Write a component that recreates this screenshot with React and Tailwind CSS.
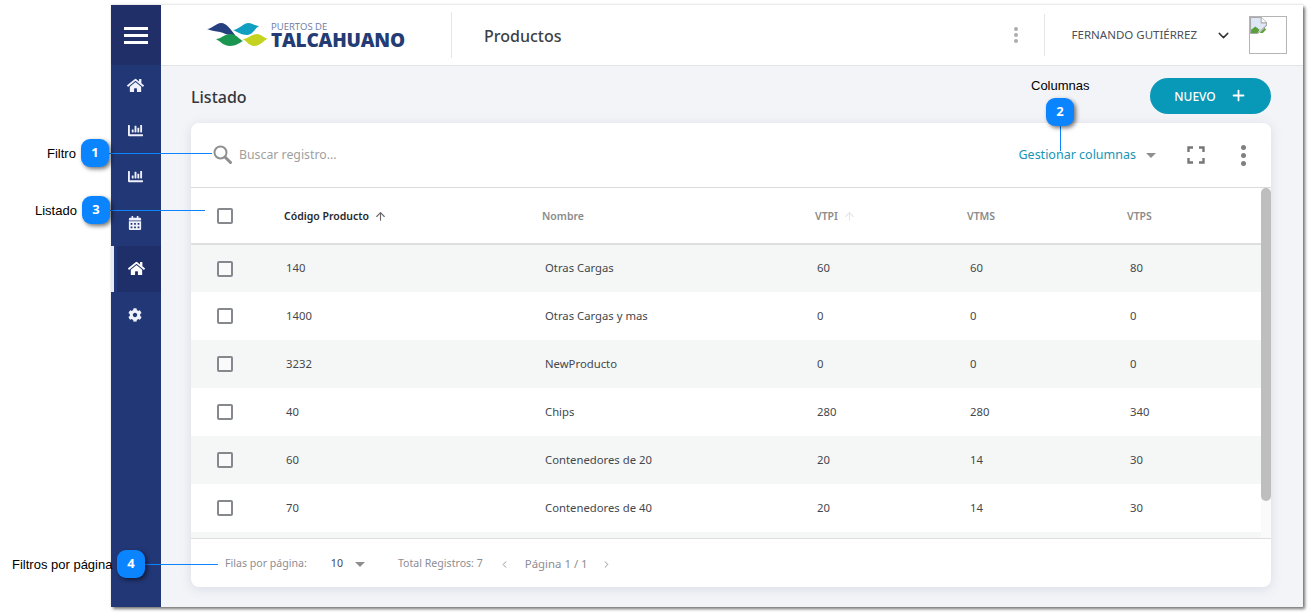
import { ArrowUp, ChevronDown, ChevronLeft, ChevronRight, Plus } from "lucide-react";
import { FaCalendarAlt, FaChartBar, FaCog, FaHome } from "react-icons/fa";

const rows = [
  { code: "140", name: "Otras Cargas", vtpi: "60", vtms: "60", vtps: "80" },
  { code: "1400", name: "Otras Cargas y mas", vtpi: "0", vtms: "0", vtps: "0" },
  { code: "3232", name: "NewProducto", vtpi: "0", vtms: "0", vtps: "0" },
  { code: "40", name: "Chips", vtpi: "280", vtms: "280", vtps: "340" },
  { code: "60", name: "Contenedores de 20", vtpi: "20", vtms: "14", vtps: "30" },
  { code: "70", name: "Contenedores de 40", vtpi: "20", vtms: "14", vtps: "30" },
];

const Checkbox = () => (
  <div className="h-4 w-4 rounded-[2px] border-2 border-[#85888c] bg-white/40" />
);

const Callout = ({ n, className }) => (
  <div
    className={`absolute z-20 flex h-7 w-7 items-center justify-center rounded-[9px] bg-[#0a84ff] text-[13px] font-bold text-white shadow-[2px_2px_4px_rgba(0,0,0,0.55)] ${className}`}
  >
    {n}
  </div>
);

const Logo = () => (
  <div className="flex items-center gap-[2px]">
    <svg width="62" height="24" viewBox="0 0 62 24">
      <path d="M0 6 C5 6 9 0 14 0 C20 0 24 7 28 12 C21 13 17 10 13 9 C9 8 5 8 0 6Z" fill="#263f7f" />
      <path d="M26 7 C31 7 35 1 41 0 C46 0 48 3 52 3 C48 5 46 12 40 12 C34 12 31 9 26 7Z" fill="#0f9fc0" />
      <path d="M9 16 C14 16 17 11 24 11 C29 11 32 16 36 18 C32 20 29 23 23 23 C17 23 14 19 9 16Z" fill="#1a9650" />
      <path d="M36 16 C41 16 45 11 50 11 C54 11 57 15 61 16 C56 17 54 23 47 23 C43 23 40 19 36 16Z" fill="#c4d31f" />
    </svg>
    <div className="flex flex-col gap-[1px]">
      <span className="font-['Open_Sans',sans-serif] text-[9.5px] leading-[9px] text-[#6c7aa3]">PUERTOS DE</span>
      <span className="font-['Open_Sans',sans-serif] text-[19px] leading-[17px] font-extrabold tracking-[-0.2px] text-[#243c73]">
        TALCAHUANO
      </span>
    </div>
  </div>
);

const BrokenImage = () => (
  <div className="h-[38px] w-[38px] border border-[#b5b5b5] bg-white">
    <svg width="17" height="17" viewBox="0 0 16 16">
      <path d="M0.5 0.5 H10.5 L15.5 5.5 V8 L10 13 L7 15.5 H0.5Z" fill="#dfe7f7" stroke="#a8a8a8" />
      <path d="M10.5 0.5 V5.5 H15.5" fill="#fff" stroke="#a8a8a8" />
      <path d="M1 15 V12 L5 9 L9 12 L7 15Z" fill="#5aa03a" />
      <path d="M9 15 L14 10 L15 12 L12 15Z" fill="#5aa03a" />
    </svg>
  </div>
);

const SideItem = ({ icon: Icon, size = 15, className = "" }) => (
  <div className={`flex h-[46px] items-center justify-center pr-[2px] text-[#eef1fb] ${className}`}>
    <Icon size={size} />
  </div>
);

export default function App() {
  return (
    <div className="relative h-[616px] w-[1312px] overflow-hidden bg-white font-['Noto_Sans',sans-serif]">
      <div className="pt-[5px] pl-[111px]">
        <div className="flex h-[602px] w-[1192px] bg-[#f3f4f7] shadow-[2px_2px_3px_rgba(0,0,0,0.55),0_-1px_2px_rgba(0,0,0,0.08)]">
          {/* sidebar */}
          <aside className="flex w-[50px] shrink-0 flex-col bg-[#223776]">
            <div className="flex h-[60px] flex-col items-center justify-center gap-[4px] bg-[#212f69]">
              <span className="h-[3px] w-6 bg-white" />
              <span className="h-[3px] w-6 bg-white" />
              <span className="h-[3px] w-6 bg-white" />
            </div>
            <SideItem icon={FaHome} size={17} className="-mt-[3px]" />
            <SideItem icon={FaChartBar} className="-mt-[1px] mb-[1px]" />
            <SideItem icon={FaChartBar} className="-mt-[1px] mb-[1px]" />
            <SideItem icon={FaCalendarAlt} size={14} />
            <div className="flex h-[46px] bg-[#223776]">
              <div className="w-[3px] bg-[#e8eaf4]" />
              <div className="ml-[3px] flex flex-1 items-center justify-center bg-[#1f2f6a] pr-[5px] pb-[2px] text-white">
                <FaHome size={17} />
              </div>
            </div>
            <SideItem icon={FaCog} size={14} />
          </aside>

          <div className="flex min-w-0 flex-1 flex-col">
            {/* header */}
            <header className="flex h-[61px] shrink-0 items-center border-b border-[#e3e4e8] bg-white">
              <div className="flex w-[290px] items-center pl-[46px]">
                <Logo />
              </div>
              <div className="h-[46px] w-px bg-[#e6e6e6]" />
              <h1 className="mt-[2px] ml-8 text-base font-medium text-[#3b3f46]">Productos</h1>
              <div className="ml-auto flex flex-col gap-[2px] pr-[26px]">
                <span className="h-1 w-1 rounded-full bg-[#adadad]" />
                <span className="h-1 w-1 rounded-full bg-[#adadad]" />
                <span className="h-1 w-1 rounded-full bg-[#adadad]" />
              </div>
              <div className="h-[42px] w-px bg-[#e6e6e6]" />
              <span className="ml-[27px] text-[11.5px] text-[#4a4f5a]">FERNANDO GUTIÉRREZ</span>
              <ChevronDown size={17} strokeWidth={2} className="ml-[18px] text-[#333]" />
              <div className="mr-4 ml-[17px] -mt-[1px]">
                <BrokenImage />
              </div>
            </header>

            {/* main */}
            <main className="flex min-h-0 flex-1 flex-col pr-[32px] pl-[30px]">
              <div className="flex h-[57px] shrink-0 items-center justify-between">
                <h2 className="mt-[5px] text-base font-medium text-[#33363b]">Listado</h2>
                <button className="mt-[2px] flex h-9 w-[121px] items-center justify-center gap-[14px] rounded-full bg-[#0898b8] text-xs font-medium text-white">
                  <span className="mt-[2px]">NUEVO</span>
                  <Plus size={17} strokeWidth={2.5} />
                </button>
              </div>

              <section className="flex h-[464px] flex-col overflow-hidden rounded-lg bg-white shadow-[0_2px_12px_rgba(90,100,160,0.16)]">
                <div className="flex h-[65px] shrink-0 items-center border-b border-[#d9d9d9] pr-[25px] pl-[22px]">
                  <svg width="19" height="19" viewBox="0 0 19 19" fill="none" stroke="#8f8f8f" className="mt-[-1px]">
                    <circle cx="7.5" cy="7.5" r="6" strokeWidth="2" />
                    <path d="M12 12 L17.5 17.5" strokeWidth="3" strokeLinecap="round" />
                  </svg>
                  <span className="mt-[1px] ml-[7px] text-[12.3px] text-[#a09fa0]">Buscar registro...</span>
                  <span className="mt-[1px] ml-auto text-[12.5px] text-[#1695b5]">Gestionar columnas</span>
                  <span className="ml-[10px] h-0 w-0 border-x-[5px] border-t-[5px] border-x-transparent border-t-[#8f8f8f]" />
                  <svg width="18" height="18" viewBox="0 0 18 18" className="ml-[31px] text-[#777]" fill="none" stroke="currentColor" strokeWidth="2.4">
                    <path d="M1.5 6V1.5H6M12 1.5H16.5V6M16.5 12V16.5H12M6 16.5H1.5V12" />
                  </svg>
                  <div className="ml-[36px] flex flex-col gap-[3px]">
                    <span className="h-[5px] w-[5px] rounded-full bg-[#808080]" />
                    <span className="h-[5px] w-[5px] rounded-full bg-[#808080]" />
                    <span className="h-[5px] w-[5px] rounded-full bg-[#808080]" />
                  </div>
                </div>

                <div className="relative flex min-h-0 flex-1 flex-col pr-[10px]">
                  <div className="grid h-[57px] shrink-0 grid-cols-[93px_258px_273px_152px_160px_1fr] items-center border-b-2 border-[#dedede] text-[10.5px] font-semibold text-[#8b8b8b]">
                    <div className="flex justify-center pr-[29px]">
                      <div className="pl-[4px]">
                        <Checkbox />
                      </div>
                    </div>
                    <div className="mt-[2px] flex items-center gap-[5px] text-[#26282c]">
                      Código Producto
                      <ArrowUp size={13} className="text-[#666]" />
                    </div>
                    <div className="mt-[2px]">Nombre</div>
                    <div className="mt-[2px] flex items-center gap-[5px]">
                      VTPI
                      <ArrowUp size={13} className="text-[#e6e6e6]" />
                    </div>
                    <div className="mt-[2px]">VTMS</div>
                    <div className="mt-[2px]">VTPS</div>
                  </div>

                  <div className="flex min-h-0 flex-1 flex-col overflow-hidden bg-[#f5f7f6] text-[11.3px] text-[#44474d]">
                    {rows.map((row, i) => (
                      <div
                        key={row.code}
                        className={`grid shrink-0 grid-cols-[95px_259px_272px_153px_160px_1fr] items-center ${
                          i === 0 ? "h-[47px]" : "h-12"
                        } ${i % 2 === 0 ? "bg-[#f5f7f6]" : "bg-white"}`}
                      >
                        <div className="flex justify-center pr-[31px]">
                          <div className="pl-[4px]">
                            <Checkbox />
                          </div>
                        </div>
                        <div>{row.code}</div>
                        <div>{row.name}</div>
                        <div>{row.vtpi}</div>
                        <div>{row.vtms}</div>
                        <div>{row.vtps}</div>
                      </div>
                    ))}
                  </div>

                  {/* scrollbar */}
                  <div className="absolute top-0 right-0 bottom-0 w-[10px] bg-[#fafafa]">
                    <div className="h-[313px] rounded-[5px] bg-[#bebebe]" />
                  </div>
                </div>

                <div className="flex h-[49px] shrink-0 items-center border-t border-[#dedede] pt-[2px] pl-[34px] text-[10.6px] text-[#8d8d94]">
                  <span>Filas por página:</span>
                  <span className="ml-[24px] text-[#45474d]">10</span>
                  <span className="ml-[12px] h-0 w-0 border-x-[5px] border-t-[5px] border-x-transparent border-t-[#8f8f8f]" />
                  <span className="ml-[33px]">Total Registros: 7</span>
                  <ChevronLeft size={11} className="ml-[16px]" />
                  <span className="ml-[15px] text-[11.4px]">Página 1 / 1</span>
                  <ChevronRight size={11} className="ml-[13px]" />
                </div>
              </section>
            </main>
          </div>
        </div>
      </div>

      {/* annotations */}
      <span className="absolute top-[144px] left-[47px] font-['Liberation_Sans',sans-serif] text-[13px] text-black">Filtro</span>
      <Callout n="1" className="top-[139px] left-[81px]" />
      <div className="absolute top-[153px] left-[109px] z-10 h-px w-[103px] bg-[#0a84ff]" />

      <span className="absolute top-[76px] left-[1031px] font-['Liberation_Sans',sans-serif] text-[13px] text-black">Columnas</span>
      <Callout n="2" className="top-[98px] left-[1046px]" />
      <div className="absolute top-[126px] left-[1060px] z-10 h-[25px] w-px bg-[#0a84ff]" />

      <span className="absolute top-[201px] left-[35px] font-['Liberation_Sans',sans-serif] text-[13px] text-black">Listado</span>
      <Callout n="3" className="top-[196px] left-[82px]" />
      <div className="absolute top-[210px] left-[110px] z-10 h-px w-[95px] bg-[#0a84ff]" />

      <span className="absolute top-[555px] left-[12px] font-['Liberation_Sans',sans-serif] text-[13px] text-black">Filtros por página</span>
      <Callout n="4" className="top-[550px] left-[117px]" />
      <div className="absolute top-[564px] left-[145px] z-10 h-px w-[73px] bg-[#0a84ff]" />
    </div>
  );
}
